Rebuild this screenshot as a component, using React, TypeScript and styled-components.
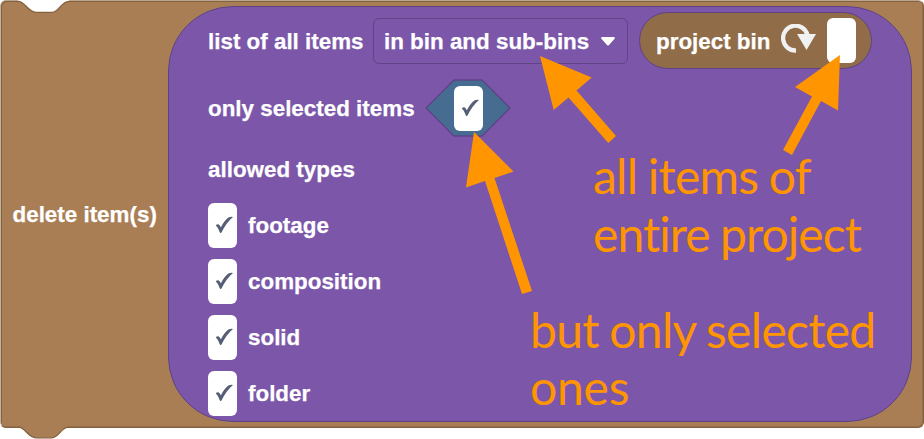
import React from "react";
import styled, { createGlobalStyle } from "styled-components";

const Global = createGlobalStyle`
  * { box-sizing: border-box; }
  body { margin: 0; background: #fff; overflow: hidden; }
`;

const Stage = styled.main`
  position: relative;
  width: 924px;
  height: 439px;
  font-family: "Liberation Sans", Arial, sans-serif;
  font-weight: 700;
  font-size: 22.4px;
  line-height: 28px;
  color: #fff;
`;

const Statement = styled.section`
  display: flex;
  width: 924px;
  height: 428px;
  padding: 5px 0 0 0;
  border: 1px solid #82613f;
  border-top-color: #bba78f;
  border-left-color: #c4b5a3;
  border-radius: 6px;
  background: #a97e55;
  box-shadow: inset 1px 1px 0 #82613f, inset -1px -1px 0 #976f48;
`;

const StatementName = styled.div`
  display: flex;
  align-items: center;
  width: 166.5px;
  height: 415px;
  padding: 0 0 0 11.5px;
`;

const Reporter = styled.div`
  display: flex;
  flex-direction: column;
  width: 744.5px;
  height: 416px;
  padding-left: 39.5px;
  border: 1.5px solid #5f4286;
  border-radius: 65px;
  background: #7b56a9;
`;

const Row = styled.div<{ $height?: number; $gap?: number }>`
  display: flex;
  align-items: center;
  flex-shrink: 0;
  height: ${(p) => p.$height ?? 56}px;
  gap: ${(p) => p.$gap ?? 11}px;
`;

const Label = styled.span<{ $width?: number; $spacing?: number }>`
  flex-shrink: 0;
  width: ${(p) => (p.$width ? `${p.$width}px` : "auto")};
  padding-top: 2px;
  letter-spacing: ${(p) => p.$spacing ?? 0}px;
  white-space: nowrap;
  -webkit-text-stroke: 0.25px #fff;
`;

const Dropdown = styled.div`
  display: flex;
  align-items: center;
  justify-content: space-between;
  flex-shrink: 0;
  width: 255px;
  height: 46px;
  padding: 0 11px 0 10px;
  border: 1.5px solid #614388;
  border-radius: 6px;
`;

const Pill = styled.div`
  display: flex;
  align-items: center;
  flex-shrink: 0;
  width: 233px;
  height: 57px;
  margin-top: -1px;
  padding-left: 16px;
  border: 1.5px solid #5f4286;
  border-radius: 29px;
  background: #906c48;
`;

const Field = styled.div`
  display: flex;
  align-items: center;
  justify-content: center;
  flex-shrink: 0;
  width: 29px;
  height: 45px;
  padding-left: 3px;
  border-radius: 6px;
  background: #fff;
`;

const RotateIcon = styled.svg`
  flex-shrink: 0;
  width: 36px;
  height: 30px;
  margin: 0 10px 4px 0;
`;

const BooleanSlot = styled.div`
  display: grid;
  place-items: center;
  width: 86px;
  height: 58px;

  > * { grid-area: 1 / 1; }
`;

const Overlay = styled.svg`
  position: absolute;
  left: 0;
  top: 0;
`;

const Note = styled.p<{ $x: number; $y: number }>`
  position: absolute;
  left: ${(p) => p.$x}px;
  top: ${(p) => p.$y}px;
  margin: 0;
  font-family: Lato, sans-serif;
  font-weight: 400;
  font-size: 48px;
  line-height: 57.5px;
  font-variant-ligatures: none;
  white-space: nowrap;
  color: #ff9500;
`;

const NoteLine = styled.span<{ $spacing: number }>`
  display: block;
  letter-spacing: ${(p) => p.$spacing}px;
  word-spacing: -1px;
`;

const Check = () => (
  <svg width="18" height="18" viewBox="0 0 18 18">
    <path
      d="M.7 9.2 Q2.6 7.6 4 8.4 L5.9 11.2 Q10 3.6 13.8 1.3 Q16 .2 18 1 Q11 7 6.5 16.6 Q5.6 17.6 4.9 16.4 Q3.4 11.6 .7 9.2Z"
      fill="#575e75"
    />
  </svg>
);

const TickBox = () => (
  <Field>
    <Check />
  </Field>
);

const types = ["footage", "composition", "solid", "folder"];

export default function App() {
  return (
    <>
      <Global />
      <Stage>
        <Statement>
          <StatementName>
            <Label>delete item(s)</Label>
          </StatementName>
          <Reporter>
            <Row $height={68}>
              <Label $width={154}>list of all items</Label>
              <Dropdown>
                <Label>in bin and sub-bins</Label>
                <svg width="16" height="11" viewBox="0 0 16 11">
                  <path d="M2 1H14Q15.5 1.3 14.6 2.7L9 9Q8 10 7 9L1.4 2.7Q.5 1.3 2 1Z" fill="#fff" />
                </svg>
              </Dropdown>
              <Pill>
                <Label $width={125}>project bin</Label>
                <RotateIcon viewBox="0 0 36 30">
                  <path d="M15 26.5A12.4 12.4 0 1 1 26.5 11" fill="none" stroke="#f0f2f2" strokeWidth="4.3" />
                  <path d="M16 10H35L25.5 26Z" fill="#f0f2f2" />
                </RotateIcon>
                <Field />
              </Pill>
            </Row>
            <Row $height={66}>
              <Label $width={206}>only selected items</Label>
              <BooleanSlot>
                <svg width="86" height="58" viewBox="0 0 86 58">
                  <path d="M1 29L29 1H57L85 29L57 57H29Z" fill="#466d91" stroke="#5f4286" strokeWidth="1.3" />
                </svg>
                <TickBox />
              </BooleanSlot>
            </Row>
            <Row>
              <Label>allowed types</Label>
            </Row>
            {types.map((type) => (
              <Row key={type}>
                <TickBox />
                <Label>{type}</Label>
              </Row>
            ))}
          </Reporter>
        </Statement>

        <Overlay width="924" height="439" viewBox="0 0 924 439">
          <path d="M18 0V1.3C25 1.3 28 12.3 36 12.3H52C59 12.3 61 1.3 69 1.3V0Z" fill="#fff" />
          <path d="M18 1.3C25 1.3 28 12.3 36 12.3H52C59 12.3 61 1.3 69 1.3" fill="none" stroke="#82613f" strokeWidth="1.3" />
          <path d="M18 425V426.8C25 426.8 28 437.8 36 437.8H52C59 437.8 61 426.8 69 426.8V425Z" fill="#a97e55" />
          <path d="M18 426.8C25 426.8 28 437.8 36 437.8H52C59 437.8 61 426.8 69 426.8" fill="none" stroke="#82613f" strokeWidth="1.3" />
          <g fill="#ff9500">
            <path d="M540 56L591.7 77.5L576.5 90.5L616 136L608.3 143L568.5 97.5L553.7 110Z" />
            <path d="M840 55L838 110.5L821 101L792 155L783 150L812 96.5L795 87Z" />
            <path d="M474 132L513.5 171.5L494.5 178L532 291L522 294L485 181L466 187.5Z" />
          </g>
        </Overlay>
        <Note $x={593} $y={147}>
          <NoteLine $spacing={-0.75}>all items of</NoteLine>
          <NoteLine $spacing={-0.95}>entire project</NoteLine>
        </Note>
        <Note $x={530} $y={300.5}>
          <NoteLine $spacing={-0.7}>but only selected</NoteLine>
          <NoteLine $spacing={-0.2}>ones</NoteLine>
        </Note>
      </Stage>
    </>
  );
}
